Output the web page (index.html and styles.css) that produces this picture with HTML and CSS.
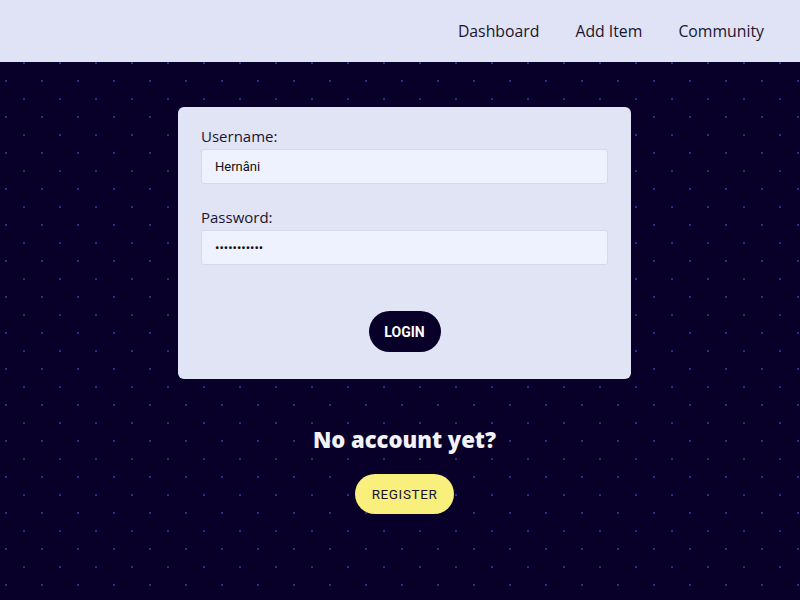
FILE: index.html
```html
<!DOCTYPE html>
<html lang="en">
<head>
  <meta charset="UTF-8">
  <meta name="viewport" content="width=device-width, initial-scale=1.0">
  <title>Login</title>
  <link rel="stylesheet" href="styles.css">
</head>
<body>

  <div class="navbar">
    <a href="#">Dashboard</a>
    <a href="#">Add Item</a>
    <a href="#">Community</a>
  </div>

  <div class="main">
    <!-- 로그인 폼 -->
    <form class="login-card">
      <label for="username">Username:</label>
      <input type="text" id="username" value="Hernâni">

      <label for="password">Password:</label>
      <input type="password" id="password" value="hernani1234">

      <button type="button" class="login-btn">LOGIN</button>
    </form>

    <h2 class="no-account">No account yet?</h2>
    <button type="button" class="register-btn">REGISTER</button>
  </div>

</body>
</html>
```

FILE: styles.css
```css
body {
  margin: 0;
  font-family: 'Open Sans', sans-serif;
  background-color: #09002a;
  background-image:
    radial-gradient(circle, #2b2d8c 1px, transparent 1.5px),
    radial-gradient(circle, #2b2d8c 1px, transparent 1.5px);
  background-size: 36px 36px;
  background-position: -12px -9px, 6px 9px;
  min-height: 600px;
}

.navbar {
  display: flex;
  justify-content: flex-end;
  align-items: center;
  gap: 36px;
  height: 62px;
  padding: 0 36px 0 0;
  box-sizing: border-box;
  background: #e0e3f5;
}

.navbar a {
  color: #1a1430;
  text-decoration: none;
  font-size: 15.8px;
}

.main {
  display: flex;
  flex-direction: column;
  align-items: center;
  padding: 45px 0 0 9px;
}

.login-card {
  display: flex;
  flex-direction: column;
  width: 407px;
  padding: 18px 23px 27px;
  background: #e1e4f5;
  border-radius: 6px;
}

.login-card label {
  font-size: 15px;
  line-height: 22px;
  color: #1a1430;
  margin-bottom: 2px;
}

.login-card input {
  height: 35px;
  box-sizing: border-box;
  padding: 0 13px;
  margin-bottom: 22px;
  border: 1px solid #d6d9ea;
  border-radius: 3px;
  background: #eef1fe;
  font-family: 'Roboto', sans-serif;
  font-size: 13px;
  color: #111;
}

.login-card input:last-of-type {
  margin-bottom: 46px;
}

.login-btn {
  align-self: center;
  width: 72px;
  height: 41px;
  border: none;
  border-radius: 21px;
  background: #09002a;
  color: #fff;
  font-family: 'Roboto', sans-serif;
  font-weight: bold;
  font-size: 14px;
  cursor: pointer;
}

.no-account {
  margin: 45px 0 20px;
  color: #f2f2f7;
  font-size: 22px;
  line-height: 30px;
  font-weight: 800;
}

.register-btn {
  width: 99px;
  height: 40px;
  border: none;
  border-radius: 20px;
  background: #f8ef7d;
  color: #1a1430;
  font-family: 'Roboto', sans-serif;
  font-size: 13.5px;
  letter-spacing: 0.6px;
  cursor: pointer;
}
```
